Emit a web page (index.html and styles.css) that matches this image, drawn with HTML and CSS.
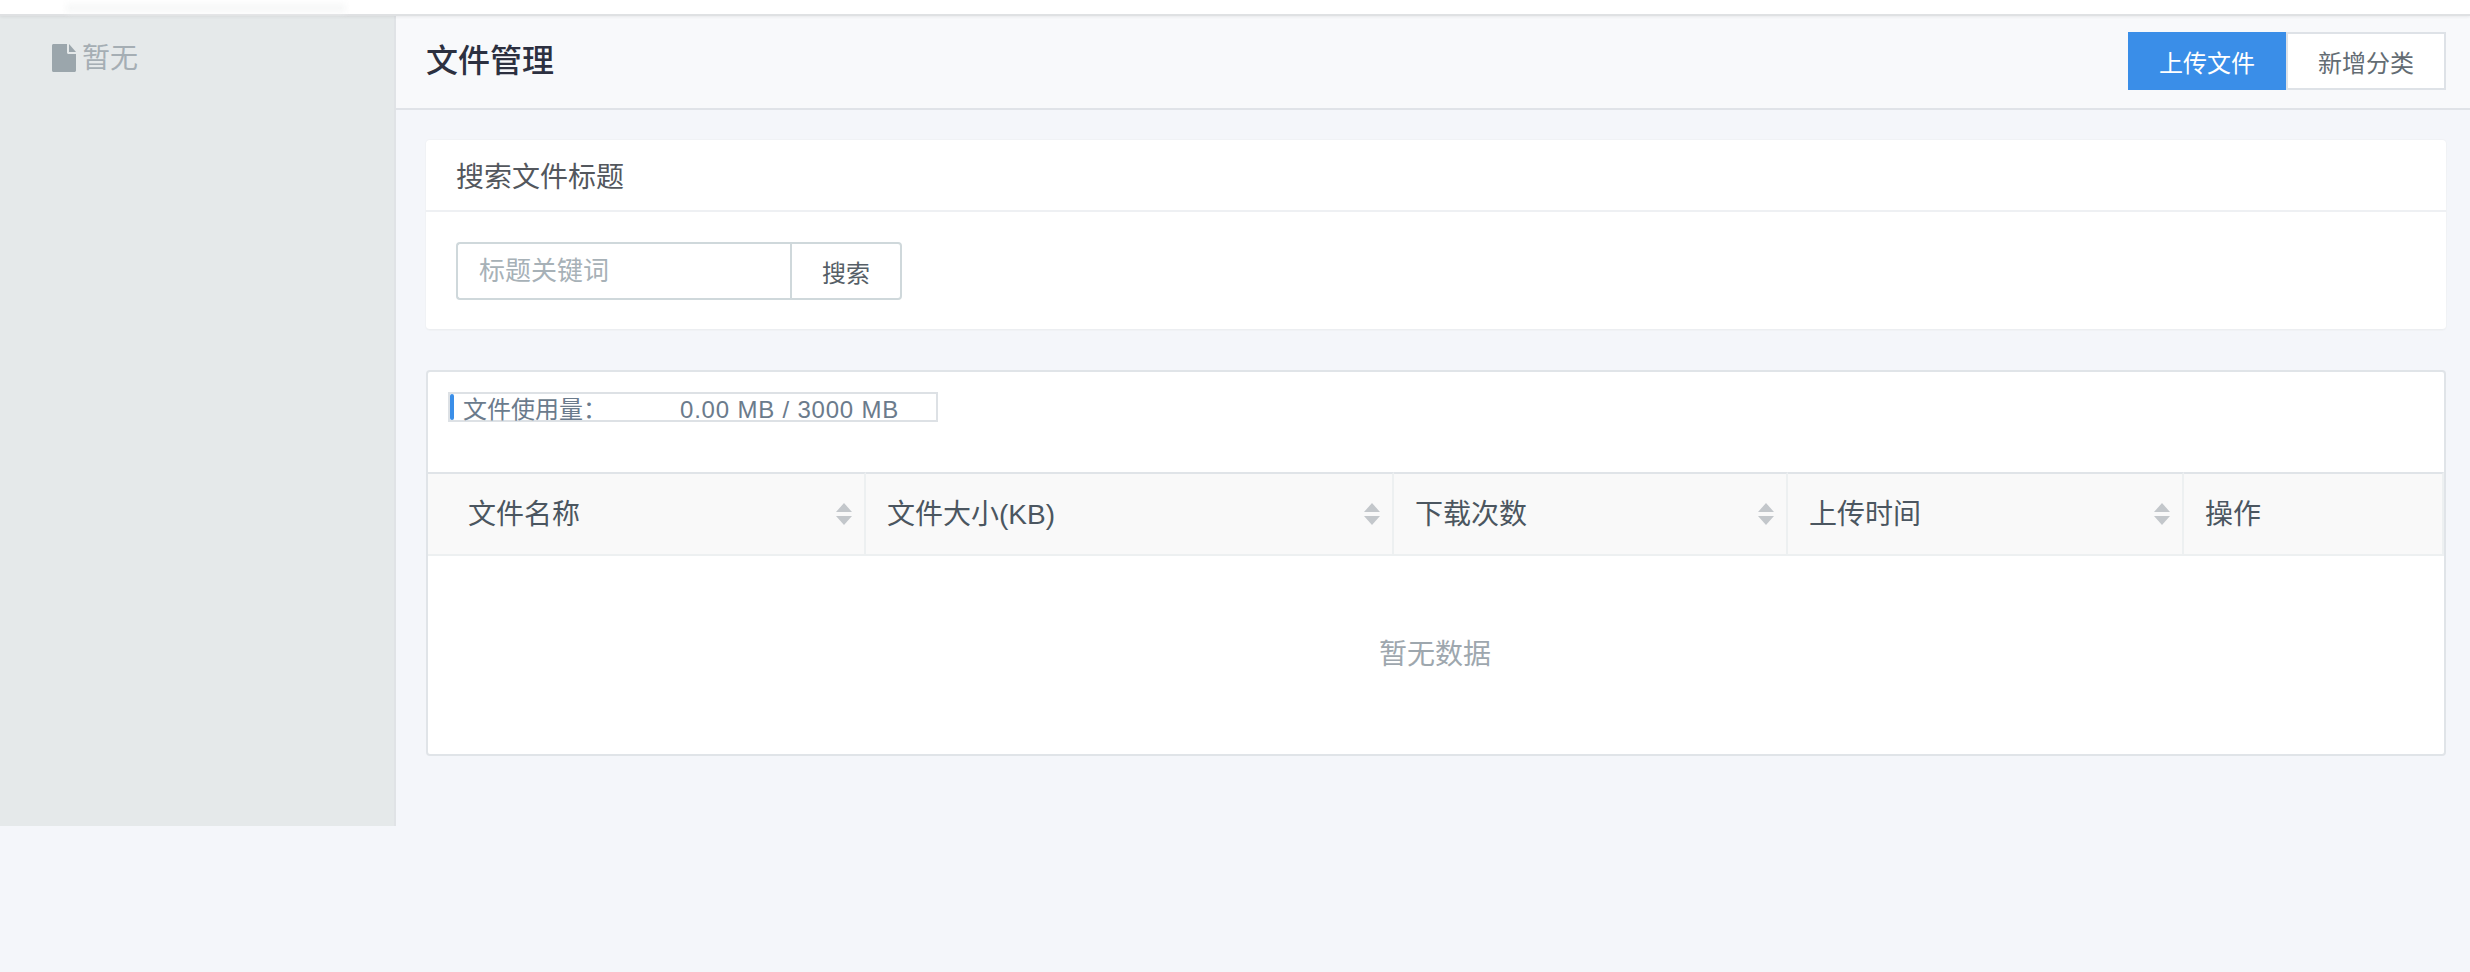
FILE: index.html
```html
<!DOCTYPE html>
<html lang="zh-CN">
<head>
<meta charset="utf-8">
<title>文件管理</title>
<link rel="stylesheet" href="styles.css">
</head>
<body>
<div class="topbar"><div class="smudge"></div></div>
<div class="layout">
  <aside class="sidebar">
    <div class="nav-item">
      <svg class="file-icon" viewBox="0 0 24 28" width="24" height="28" aria-hidden="true"><path d="M1.500 0H15v8.500c0 .8.700 1.500 1.500 1.500H24v16.500c0 .8-.7 1.500-1.500 1.500h-21C.7 28 0 27.300 0 26.500V1.500C0 .7.700 0 1.500 0zM17 0l7 8h-7z" fill="#9ba6ac"/></svg>
      <span class="nav-text">暂无</span>
    </div>
  </aside>
  <main class="content">
    <header class="page-head">
      <h1>文件管理</h1>
      <div class="btn-group">
        <button class="btn btn-primary">上传文件</button>
        <button class="btn btn-light">新增分类</button>
      </div>
    </header>
    <div class="page-body">
      <section class="card search-card">
        <div class="card-title">搜索文件标题</div>
        <div class="card-body">
          <div class="search-row">
            <input class="search-input" type="text" placeholder="标题关键词">
            <button class="search-btn">搜索</button>
          </div>
        </div>
      </section>
      <section class="card table-card">
        <div class="usage-wrap">
          <div class="usage">
            <div class="usage-bar"></div>
            <span class="usage-label">文件使用量：</span>
            <span class="usage-value">0.00 MB / 3000 MB</span>
          </div>
        </div>
        <table class="files">
          <colgroup>
            <col class="c1"><col class="c2"><col class="c3"><col class="c4"><col class="c5">
          </colgroup>
          <thead>
            <tr>
              <th class="first"><div class="th-in"><span>文件名称</span><svg class="sort" viewBox="0 0 16 22" width="16" height="22"><path d="M8 0l8 9H0z M8 22L0 13h16z" fill="#c3c7cb"/></svg></div></th>
              <th><div class="th-in"><span>文件大小(KB)</span><svg class="sort" viewBox="0 0 16 22" width="16" height="22"><path d="M8 0l8 9H0z M8 22L0 13h16z" fill="#c3c7cb"/></svg></div></th>
              <th><div class="th-in"><span>下载次数</span><svg class="sort" viewBox="0 0 16 22" width="16" height="22"><path d="M8 0l8 9H0z M8 22L0 13h16z" fill="#c3c7cb"/></svg></div></th>
              <th><div class="th-in"><span>上传时间</span><svg class="sort" viewBox="0 0 16 22" width="16" height="22"><path d="M8 0l8 9H0z M8 22L0 13h16z" fill="#c3c7cb"/></svg></div></th>
              <th><div class="th-in"><span>操作</span></div></th>
            </tr>
          </thead>
          <tbody>
            <tr><td class="empty" colspan="5">暂无数据</td></tr>
          </tbody>
        </table>
      </section>
    </div>
  </main>
</div>
</body>
</html>
```
FILE: styles.css
```css
* { box-sizing: border-box; }
html, body { margin: 0; padding: 0; }
body {
  height: 972px;
  overflow: hidden;
  background: #f4f6fa;
  font-family: "Liberation Sans", "Noto Sans CJK SC", sans-serif;
  color: #4b5660;
}
.topbar {
  position: relative;
  z-index: 1;
  height: 16px;
  background: #fff;
  border-bottom: 2px solid #dfe1e3;
  box-shadow: 0 1px 3px rgba(0, 0, 0, .07);
}
.smudge {
  position: absolute;
  left: 66px;
  top: 4px;
  width: 280px;
  height: 8px;
  background: #f6f7f7;
  filter: blur(3px);
}
.layout { display: flex; align-items: flex-start; }
.sidebar {
  width: 396px;
  height: 810px;
  flex: none;
  background: #e5e9ea;
  border-right: 2px solid #e0e3e6;
  padding: 26px 0 0 52px;
}
.nav-item {
  display: flex;
  align-items: center;
  gap: 6px;
  font-size: 28px;
  line-height: 28px;
  color: #a5aeb4;
}
.nav-text { padding-top: 3px; }
.file-icon { flex: none; display: block; }
.content { flex: 1; min-width: 0; }
.page-head {
  height: 94px;
  background: #f8f9fb;
  border-bottom: 2px solid #e0e3e8;
  display: flex;
  align-items: center;
  justify-content: space-between;
  padding: 0 24px 2px 30px;
}
.page-head h1 {
  margin: 0;
  font-size: 32px;
  line-height: 44px;
  font-weight: 500;
  color: #2c3040;
}
.btn-group { display: flex; }
.btn {
  height: 58px;
  font: inherit;
  font-size: 24px;
  padding: 0;
  cursor: pointer;
}
.btn-primary {
  width: 158px;
  background: #3a8ee8;
  border: 0;
  color: #fff;
}
.btn-light {
  width: 160px;
  background: #fff;
  border: 2px solid #dee2e7;
  color: #636c73;
}
.page-body { padding: 30px 24px 0 30px; }
.card {
  background: #fff;
  border-radius: 4px;
}
.search-card {
  height: 190px;
  border-bottom: 1px solid #eceef1;
  box-shadow: 0 0 0 1px #f0f2f5;
}
.card-title {
  height: 72px;
  padding: 3px 30px 0;
  border-bottom: 2px solid #eef0f3;
  font-size: 28px;
  line-height: 70px;
  color: #53575d;
}
.card-body { padding: 30px 30px 0; }
.search-row { display: flex; }
.search-input {
  width: 334px;
  height: 58px;
  border: 2px solid #cfd8db;
  border-right: 0;
  border-radius: 4px 0 0 4px;
  padding: 0 0 0 21px;
  font: inherit;
  font-size: 26px;
  color: #4b5660;
  outline: none;
}
.search-input::placeholder { color: #a7b1b7; opacity: 1; }
.search-btn {
  width: 112px;
  height: 58px;
  border: 2px solid #cfd8db;
  border-radius: 0 4px 4px 0;
  background: #fff;
  font: inherit;
  font-size: 24px;
  color: #565f67;
  padding: 0;
}
.table-card {
  margin-top: 40px;
  height: 386px;
  border: 2px solid #e0e4e8;
  overflow: hidden;
}
.usage-wrap { height: 100px; padding: 20px 0 0 20px; }
.usage {
  position: relative;
  width: 490px;
  height: 30px;
  border: 2px solid #dde1e5;
  display: flex;
  align-items: center;
  font-size: 24px;
  line-height: 26px;
  color: #6b7b8c;
}
.usage-bar {
  width: 4px;
  height: 26px;
  border-radius: 2px;
  background: #3a8ee8;
  flex: none;
}
.usage-label { margin-left: 9px; width: 217px; flex: none; position: relative; top: 3px; }
.usage-value { white-space: nowrap; letter-spacing: .8px; position: relative; top: 3px; }
.files {
  width: 100%;
  table-layout: fixed;
  border-collapse: separate;
  border-spacing: 0;
}
.c1 { width: 438px; }
.c2 { width: 528px; }
.c3 { width: 394px; }
.c4 { width: 396px; }
.files th {
  height: 84px;
  padding: 0 21px 4px;
  background: #f9f9f9;
  border-top: 2px solid #e0e4e8;
  border-bottom: 2px solid #edf0f1;
  border-right: 2px solid #edf0f1;
  font-weight: 400;
  font-size: 28px;
  text-align: left;
  color: #4b5660;
}
.files th.first { padding-left: 40px; }
.th-in { display: flex; align-items: center; justify-content: space-between; margin-right: -9px; }
.sort { flex: none; display: block; margin-top: 3px; }
.empty {
  height: 196px;
  padding: 0 2px 4px 0;
  text-align: center;
  font-size: 28px;
  color: #9ea7ae;
}
```
